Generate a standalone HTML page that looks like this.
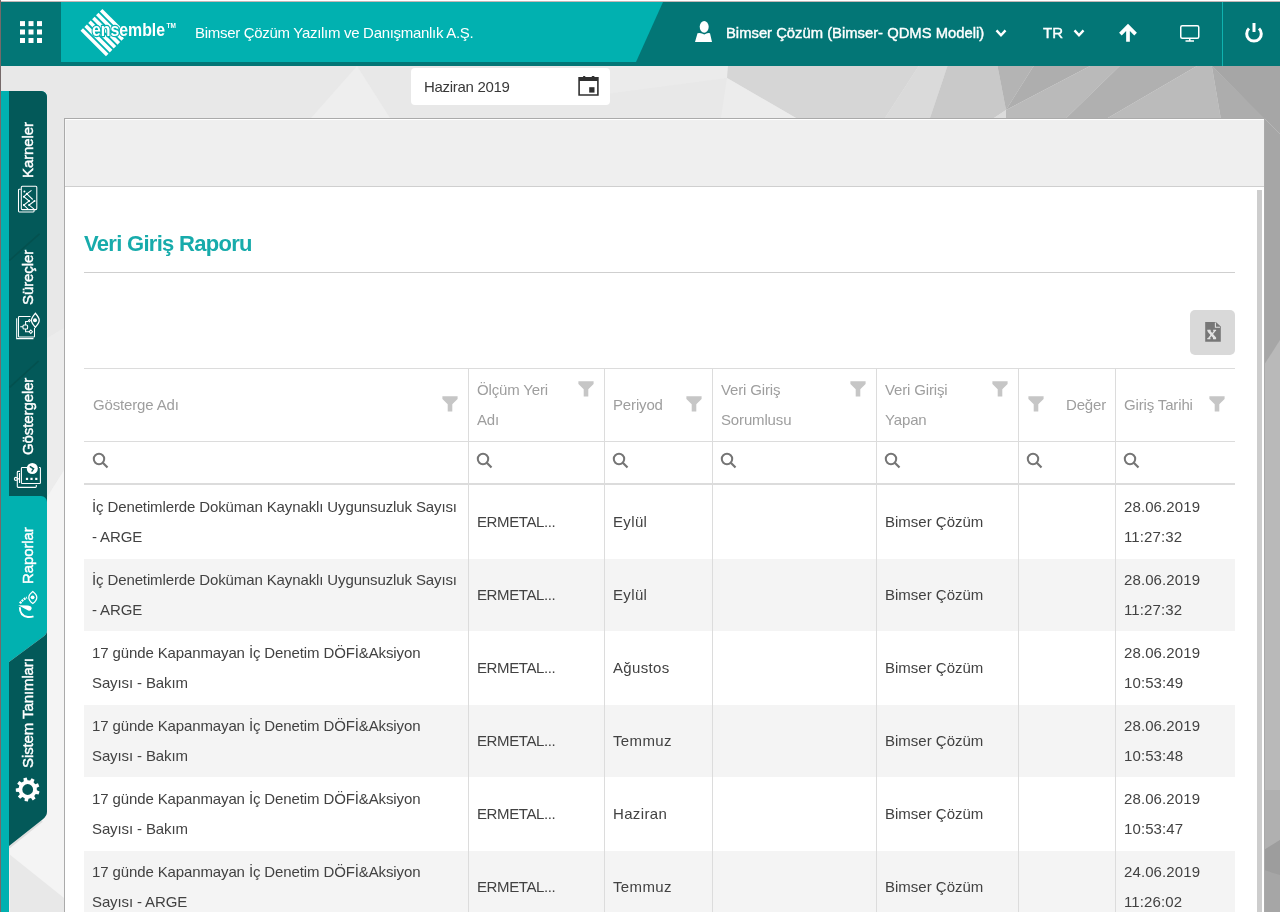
<!DOCTYPE html>
<html><head><meta charset="utf-8">
<style>
*{box-sizing:border-box}
html,body{margin:0;padding:0}
body{width:1280px;height:912px;overflow:hidden;position:relative;background:#e9e9e9;font-family:"Liberation Sans",sans-serif;}
.a{position:absolute}
svg{display:block}
.c,.h,.w,.side,#title,#dateTxt{will-change:transform}
#frameTop{left:0;top:0;width:1280px;height:1px;background:#fff}
#frameTop2{left:0;top:1px;width:1280px;height:1px;background:#c4b6b6}
#frameLeft{left:0;top:0;width:1px;height:912px;background:#756969}
#hdr{left:1px;top:2px;width:1279px;height:64px;background:#037676}
#teal{left:61px;top:2px;width:602px;height:60px;background:#01b1b0;clip-path:polygon(0 0,100% 0,575px 100%,0 100%)}
.w{color:#fff;white-space:nowrap}
#company{left:195px;top:24px;font-size:15px;letter-spacing:-0.3px}
#user{left:726px;top:25px;font-size:14.8px;-webkit-text-stroke:0.4px #fff}
#tr{left:1043px;top:24px;font-size:15px;-webkit-text-stroke:0.4px #fff}
#divider{left:1222px;top:2px;width:1px;height:64px;background:#0fb3b0}

/* sidebar */
#strip{left:1px;top:91px;width:8px;height:821px;background:#01b1b0}
#stripTop{left:1px;top:91px;width:8px;height:6px;background:#01b1b0}
.side{font-size:15px;font-weight:400;letter-spacing:-0.1px;-webkit-text-stroke:0.4px #fff;color:#fff;white-space:nowrap;transform-origin:0 0;transform:rotate(-90deg)}

/* date picker */
#date{left:411px;top:68px;width:199px;height:37px;background:#fff;border-radius:4px;}
#dateTxt{left:424px;top:78px;font-size:15px;color:#383838;letter-spacing:-0.3px}

/* panel */
#panel{left:64px;top:118px;width:1201px;height:800px;background:#fff;border:1px solid #aaa;}
#phead{left:65px;top:119px;width:1199px;height:67px;background:#efefef;border-top:1px solid #fff;border-left:1px solid #f5f5f5}
#pheadB{left:65px;top:186px;width:1199px;height:1px;background:#cfcfcf}
#scroll{left:1257px;top:190px;width:5px;height:722px;background:#cdcdcd}
#title{left:84px;top:231px;font-size:22px;font-weight:700;letter-spacing:-0.7px;color:#17abab;white-space:nowrap}
#tline{left:84px;top:272px;width:1151px;height:1px;background:#cfcfcf}
#xls{left:1190px;top:310px;width:45px;height:45px;background:#d9d9d9;border-radius:5px}

/* table */
#tbl{left:84px;top:368px;width:1151px}
.hl{position:absolute;left:0;width:1151px;background:#dcdcdc}
.vl{position:absolute;width:1px;background:#dcdcdc}
.row{position:absolute;left:0;width:1151px;height:73px}
.row.g::before{content:"";position:absolute;left:0;right:0;top:1px;bottom:0;background:#f4f4f4}
.c{position:absolute;font-size:15px;color:#424242;line-height:30px;white-space:nowrap}
.h{position:absolute;font-size:15px;color:#9e9e9e;line-height:30px;white-space:nowrap;letter-spacing:-0.15px}
.flt{position:absolute}
.srch{position:absolute;top:85px}
</style></head>
<body>
<!-- background -->
<svg class="a" style="left:0;top:0" width="1280" height="912" viewBox="0 0 1280 912">
<rect width="1280" height="912" fill="#e8e8e8"/>
<polygon points="357,66 311,118 390,118" fill="#eeeeee"/>
<polygon points="560,66 728,66 727,78 560,100" fill="#ebebeb"/>
<polygon points="728,66 918.7,66 885,118 796,118 727,78" fill="#d6d6d6"/>
<polygon points="727,78 721,118 796,118" fill="#ececec"/>
<polygon points="918.7,66 947.5,66 930,118 885,118" fill="#dadada"/>
<polygon points="947.5,66 997.5,66 1006,110 994,118 930,118" fill="#c9c9c9"/>
<polygon points="994,118 1006,110 1006,118" fill="#dcdcdc"/>
<polygon points="997.5,66 1033.6,66 1006,110" fill="#b4b4b4"/>
<polygon points="1033.6,66 1090,66 1006,110" fill="#aeaeae"/>
<polygon points="1090,66 1119.7,66 1066.3,118 1006,118 1006,110" fill="#bababa"/>
<polygon points="1119.7,66 1196.9,66 1107.8,118 1066.3,118" fill="#b0b0b0"/>
<polygon points="1196.9,66 1211.8,66 1220.7,118 1107.8,118" fill="#bbbbbb"/>
<polygon points="1211.8,66 1220.7,118 1265,118" fill="#adadad"/>
<polygon points="1211.8,66 1280,66 1280,134 1264,118" fill="#a6a6a6"/>
<polygon points="1264,118 1280,134 1280,912 1264,912" fill="#a6a6a6"/>
<polygon points="1264,365 1280,340 1280,790 1264,790" fill="#b9b9b9"/>
<polygon points="1264,790 1280,790 1280,840 1264,850" fill="#b0b0b0"/>
<polygon points="1264,850 1280,840 1280,875 1264,870" fill="#9d9d9d"/>
<polygon points="47,338 64,328 64,470 47,497" fill="#ececec"/>
<polygon points="47,497 64,470 64,898 9,854 9,846 47,815" fill="#f4f4f4"/>
<rect x="9" y="846" width="1" height="66" fill="#f8f0f0"/>
</svg>

<div class="a" id="frameTop"></div><div class="a" id="frameTop2"></div>
<div class="a" id="hdr"></div>
<div class="a" id="teal"></div>
<div class="a" id="frameLeft"></div>
<div class="a" id="divider"></div>

<!-- grid icon -->
<svg class="a" style="left:18px;top:19px" width="26" height="26" viewBox="0 0 26 26" fill="#fff">
<rect x="2" y="2.1" width="5" height="5"/><rect x="10.5" y="2.1" width="5" height="5"/><rect x="19" y="2.1" width="5" height="5"/>
<rect x="2" y="10.5" width="5" height="5"/><rect x="10.5" y="10.5" width="5" height="5"/><rect x="19" y="10.5" width="5" height="5"/>
<rect x="2" y="19" width="5" height="5"/><rect x="10.5" y="19" width="5" height="5"/><rect x="19" y="19" width="5" height="5"/>
</svg>

<!-- logo -->
<svg class="a" style="left:76px;top:4px;will-change:transform" width="104" height="56" viewBox="0 0 104 56">
<g transform="translate(26.4,4.9) rotate(45)" fill="#fff">
<rect x="0" y="0" width="36" height="3.6"/>
<rect x="0" y="5.48" width="36" height="3.6"/>
<rect x="0" y="10.96" width="36" height="3.6"/>
<rect x="0" y="16.44" width="36" height="3.6"/>
<rect x="0" y="21.92" width="36" height="3.6"/>
<rect x="0" y="27.4" width="36" height="3.6"/>
</g>
<text x="16" y="31.7" font-family="Liberation Sans" font-size="18.5" font-weight="700" fill="#fff" stroke="#01b1b0" stroke-width="2.4" paint-order="stroke" stroke-linejoin="round" textLength="73" lengthAdjust="spacingAndGlyphs">ensemble</text>
<text x="90.6" y="24.2" font-family="Liberation Sans" font-size="6.8" font-weight="700" fill="#fff" textLength="9.4" lengthAdjust="spacingAndGlyphs">TM</text>
</svg>

<div class="a w" id="company">Bimser Çözüm Yazılım ve Danışmanlık A.Ş.</div>

<!-- user icon -->
<svg class="a" style="left:694px;top:20px" width="20" height="24" viewBox="0 0 20 24" fill="#fff">
<ellipse cx="10.2" cy="6.8" rx="4.5" ry="5.9"/>
<path d="M3.5 13.2 Q7 12.2 10.3 14.5 Q13.5 12.2 16 13.2 L18 22 L1 22 Z"/>
</svg>
<div class="a w" id="user">Bimser Çözüm (Bimser- QDMS Modeli)</div>
<svg class="a" style="left:994px;top:27px" width="14" height="12" viewBox="0 0 14 12"><path d="M2.5 3.4 L7 8.3 L11.5 3.4" fill="none" stroke="#fff" stroke-width="2.4"/></svg>
<div class="a w" id="tr">TR</div>
<svg class="a" style="left:1072px;top:27px" width="14" height="12" viewBox="0 0 14 12"><path d="M2.5 3.4 L7 8.3 L11.5 3.4" fill="none" stroke="#fff" stroke-width="2.4"/></svg>
<!-- up arrow -->
<svg class="a" style="left:1116px;top:22px" width="24" height="24" viewBox="0 0 24 24"><path d="M12 19.8 V5 M4.4 12.1 L12 4.4 L19.6 12.1" fill="none" stroke="#fff" stroke-width="3.7" stroke-linecap="butt"/></svg>
<!-- monitor -->
<svg class="a" style="left:1178px;top:23px" width="24" height="20" viewBox="0 0 24 20" fill="none" stroke="#fff" stroke-width="1.5">
<rect x="2.75" y="2.75" width="18" height="12.5" rx="1.5"/><path d="M11.75 15.5 V17.5 M7.5 18 H16"/></svg>
<!-- power -->
<svg class="a" style="left:1241px;top:21px" width="26" height="24" viewBox="0 0 26 24" fill="none" stroke="#fff" stroke-width="3">
<path d="M8 7.5 A7.3 7.3 0 1 0 18 7.5"/><path d="M13 2 V11"/></svg>

<!-- sidebar -->
<svg class="a" style="left:0;top:85px" width="60" height="827" viewBox="0 0 60 827">
<path d="M9 762.5 L42 736" stroke="#dedede" stroke-width="2.2"/>
<path d="M1 6 H41 A6 6 0 0 1 47 12 V410 H9 V827 H1 Z" fill="#01b1b0"/>
<path d="M9 6 H41 A6 6 0 0 1 47 12 V425 H9 Z" fill="#035959"/>
<path d="M9.4 175.5 L39.5 148.9" stroke="#04514f" stroke-width="1.6"/>
<path d="M9.6 302.4 L38.6 276" stroke="#04514f" stroke-width="1.6"/>
<path d="M1 411 H41 A6 6 0 0 1 47 417 V545 Q47 549 43.5 551.5 L9 577 V827 H1 Z" fill="#01b1b0"/>
<path d="M9 577 L43.5 551.5 Q47 549 47 545 V726.8 Q47 731 42.5 734.5 L9 761 Z" fill="#035959"/>
</svg>
<div class="a side" style="left:18.5px;top:178px">Karneler</div>
<div class="a side" style="left:18.5px;top:305px">Süreçler</div>
<div class="a side" style="left:18.5px;top:455px">Göstergeler</div>
<div class="a side" style="left:18.5px;top:584px">Raporlar</div>
<div class="a side" style="left:18.5px;top:768px">Sistem Tanımları</div>

<!-- sidebar icons -->
<svg class="a" style="left:14px;top:182px" width="28" height="34" viewBox="0 0 28 34" fill="none" stroke="#fff" stroke-width="1.05">
<rect x="7.3" y="4.3" width="15.5" height="23.3" rx="1"/>
<path d="M6.8 7.3 H5.3 Q4.5 7.3 4.5 8.1 V29.1 Q4.5 29.9 5.3 29.9 H19.3 Q20.1 29.9 20.1 29.1 V28"/>
<path d="M12.9 11.9 L17.5 8.4 M12.9 11.9 L9.9 14.7 M12.9 11.9 L18.7 17.5 M9.9 14.7 L15.1 19 L9.9 23.1 L14.5 27.6 M20.5 19 L15.1 23.1 L20.1 27.2"/>
<g fill="#fff" stroke="none"><circle cx="10.4" cy="9.5" r="1"/><circle cx="12.9" cy="11.9" r="1.1"/><circle cx="9.9" cy="14.7" r="1"/><circle cx="15.1" cy="19" r="1"/><circle cx="20.5" cy="19" r="1"/><circle cx="9.9" cy="23.1" r="1"/><circle cx="15.1" cy="23.1" r="1"/></g>
</svg>
<svg class="a" style="left:12px;top:308px" width="30" height="36" viewBox="0 0 30 36" fill="none" stroke="#fff" stroke-width="1.05">
<path d="M18.5 8.5 H7.3 Q6.5 8.5 6.5 9.3 V28.2 Q6.5 29 7.3 29 H21.7 Q22.5 29 22.5 28.2 V20"/>
<path d="M4.7 10.3 V30.6 H21.5"/>
<rect x="11" y="17" width="4.6" height="3.9" rx="1"/>
<path d="M8.3 18.75 H11 M13.6 17 V13.4 H16.5 M13.6 20.9 V23.7 H17"/>
<path d="M17.4 11.6 L18.3 12.6 L17.4 13.6 L16.5 12.6 Z"/>
<path d="M18.8 24 L18.8 24 M17.2 23.7 L18.8 22 L20.5 23.7 L18.8 25.5 Z"/>
<path d="M23.3 5.3 Q27.4 10 27.2 12.3 Q27.4 14.6 23.3 19.3 Q19.3 14.6 19.4 12.3 Q19.3 10 23.3 5.3 Z" stroke-width="1.3"/>
<circle cx="23" cy="12.3" r="2" fill="#fff" stroke="none"/>
</svg>
<svg class="a" style="left:10px;top:458px" width="34" height="36" viewBox="0 0 34 36" fill="none" stroke="#fff" stroke-width="1.1">
<path d="M17.5 9.5 H12.2 Q11.4 9.5 11.4 10.3 V24.7 Q11.4 25.5 12.2 25.5 H29.6 Q30.4 25.5 30.4 24.7 V10.3 Q30.4 9.5 29.6 9.5 H29"/>
<path d="M10 13.4 H8.1 Q7.3 13.4 7.3 14.2 V28.6 Q7.3 29.4 8.1 29.4 H25.5 Q26.3 29.4 26.3 28.6 V27"/>
<circle cx="5.9" cy="20.9" r="1.5"/><path d="M7.5 20.9 H9.5 M9.5 15 V25"/>
<circle cx="22.3" cy="10.5" r="5.5" fill="#fff" stroke="none"/>
<path d="M19.8 8.3 L23.6 10.8 L21.6 13.6" stroke="#035959" stroke-width="1.4"/>
<g fill="#fff" stroke="none"><rect x="15.9" y="19.8" width="2.2" height="2.2"/><rect x="20.4" y="19.8" width="2.2" height="2.2"/><rect x="25.2" y="19.8" width="2.2" height="2.2"/></g>
</svg>
<svg class="a" style="left:12px;top:586px" width="30" height="36" viewBox="0 0 30 36" fill="none" stroke="#fff">
<path d="M20.8 5.5 C23.6 7.7 24.8 9.5 24.8 11.4 C24.8 13.4 23.6 15.3 20.8 17.5 C18 15.3 16.8 13.4 16.8 11.4 C16.8 9.5 18 7.7 20.8 5.5 Z" stroke-width="1.25"/>
<circle cx="20.6" cy="11.3" r="1.9" fill="#fff" stroke="none"/>
<path d="M8 17.4 Q10.8 13.2 15 11.6" stroke-width="2.3" stroke-dasharray="2 0.8"/>
<path d="M6.2 19.3 L16 19.6 Q19.8 20.2 19.6 22.5 Q19.2 25.2 16.2 24.6 Z" fill="#fff" stroke="none"/>
<path d="M7.8 21.3 Q7.8 30 15.8 31 Q19 31.2 21.5 30.4" stroke-width="1.9"/>
</svg>
<svg class="a" style="left:10px;top:772px" width="34" height="34" viewBox="0 0 34 34">
<path fill="#fff" fill-rule="evenodd" d="M13.81 9.16 L13.40 6.30 L16.65 5.55 L17.54 8.30 L20.08 8.61 L21.61 6.15 L24.58 7.67 L23.49 10.35 L25.24 12.22 L27.99 11.32 L29.29 14.39 L26.73 15.74 L26.86 18.30 L29.55 19.38 L28.58 22.57 L25.75 21.96 L24.21 24.01 L25.57 26.56 L22.77 28.38 L21.00 26.09 L18.50 26.66 L17.91 29.50 L14.59 29.09 L14.70 26.20 L12.42 25.04 L10.15 26.83 L7.87 24.38 L9.81 22.24 L8.81 19.88 L5.92 19.79 L5.75 16.45 L8.61 16.06 L9.36 13.61 L7.20 11.68 L9.21 9.01 L11.66 10.56 Z M23.10 17.50 A5.4 5.4 0 1 0 12.30 17.50 A5.4 5.4 0 1 0 23.10 17.50 Z"/>
</svg>

<!-- date picker -->
<div class="a" id="date"></div>
<div class="a" id="dateTxt">Haziran 2019</div>
<svg class="a" style="left:572px;top:70px" width="32" height="32" viewBox="0 0 32 32">
<path fill="#303030" fill-rule="evenodd" d="M6.3 7 H26.7 V25.8 H6.3 Z M7.9 10.9 V24.2 H25.1 V10.9 Z"/>
<rect x="11" y="5.9" width="2.4" height="1.6" rx="0.7" fill="#303030"/><rect x="19.7" y="5.9" width="2.8" height="1.6" rx="0.7" fill="#303030"/>
<rect x="17.2" y="17.2" width="5.3" height="5.4" fill="#303030"/>
</svg>

<!-- panel -->
<div class="a" id="panel"></div>
<div class="a" id="phead"></div>
<div class="a" id="pheadB"></div>
<div class="a" id="scroll"></div>
<div class="a" id="title">Veri Giriş Raporu</div>
<div class="a" id="tline"></div>
<div class="a" id="xls"></div>
<svg class="a" style="left:1198px;top:316px" width="30" height="32" viewBox="0 0 30 32">
<path d="M7.2 6.1 H17.9 L22.8 10.5 V25.8 H7.2 Z" fill="#777"/>
<path d="M17.4 6.6 V11.3 H22" fill="none" stroke="#e2e2e2" stroke-width="1.1"/>
<g stroke="#e2e2e2" fill="none"><path d="M10.4 14.6 L17.3 22.5" stroke-width="2.6"/><path d="M17 14.6 L10.6 22.5" stroke-width="1.4"/><path d="M9.3 14.4 H12.6 M15.2 14.4 H18.1 M9.3 22.6 H12.4 M15 22.6 H18.1" stroke-width="1.1"/></g>
</svg>

<div class="a" id="tbl">
<div class="hl" style="top:0;height:1px"></div>
<div class="hl" style="top:73px;height:1px"></div>
<div class="hl" style="top:115px;height:2px"></div>
<div class="h" style="left:9px;top:22px">Gösterge Adı</div>
<svg class="flt" style="left:358px;top:28px" width="16" height="16" viewBox="0 0 16 16"><path d="M0.4 0.3 H15.6 V3 L10.3 8.3 V15.6 H5.7 V8.3 L0.4 3 Z" fill="#c6c6c6"/></svg>
<svg class="srch" style="left:8px;top:84px" width="18" height="18" viewBox="0 0 18 18"><circle cx="7" cy="7" r="5.2" fill="none" stroke="#757575" stroke-width="2"/><path d="M10.8 10.8 L15.5 15.5" stroke="#757575" stroke-width="2.2"/></svg>
<div class="h" style="left:393px;top:7px">Ölçüm Yeri<br>Adı</div>
<svg class="flt" style="left:494px;top:13px" width="16" height="16" viewBox="0 0 16 16"><path d="M0.4 0.3 H15.6 V3 L10.3 8.3 V15.6 H5.7 V8.3 L0.4 3 Z" fill="#c6c6c6"/></svg>
<svg class="srch" style="left:392px;top:84px" width="18" height="18" viewBox="0 0 18 18"><circle cx="7" cy="7" r="5.2" fill="none" stroke="#757575" stroke-width="2"/><path d="M10.8 10.8 L15.5 15.5" stroke="#757575" stroke-width="2.2"/></svg>
<div class="h" style="left:529px;top:22px">Periyod</div>
<svg class="flt" style="left:602px;top:28px" width="16" height="16" viewBox="0 0 16 16"><path d="M0.4 0.3 H15.6 V3 L10.3 8.3 V15.6 H5.7 V8.3 L0.4 3 Z" fill="#c6c6c6"/></svg>
<svg class="srch" style="left:528px;top:84px" width="18" height="18" viewBox="0 0 18 18"><circle cx="7" cy="7" r="5.2" fill="none" stroke="#757575" stroke-width="2"/><path d="M10.8 10.8 L15.5 15.5" stroke="#757575" stroke-width="2.2"/></svg>
<div class="h" style="left:637px;top:7px">Veri Giriş<br>Sorumlusu</div>
<svg class="flt" style="left:766px;top:13px" width="16" height="16" viewBox="0 0 16 16"><path d="M0.4 0.3 H15.6 V3 L10.3 8.3 V15.6 H5.7 V8.3 L0.4 3 Z" fill="#c6c6c6"/></svg>
<svg class="srch" style="left:636px;top:84px" width="18" height="18" viewBox="0 0 18 18"><circle cx="7" cy="7" r="5.2" fill="none" stroke="#757575" stroke-width="2"/><path d="M10.8 10.8 L15.5 15.5" stroke="#757575" stroke-width="2.2"/></svg>
<div class="h" style="left:801px;top:7px">Veri Girişi<br>Yapan</div>
<svg class="flt" style="left:908px;top:13px" width="16" height="16" viewBox="0 0 16 16"><path d="M0.4 0.3 H15.6 V3 L10.3 8.3 V15.6 H5.7 V8.3 L0.4 3 Z" fill="#c6c6c6"/></svg>
<svg class="srch" style="left:800px;top:84px" width="18" height="18" viewBox="0 0 18 18"><circle cx="7" cy="7" r="5.2" fill="none" stroke="#757575" stroke-width="2"/><path d="M10.8 10.8 L15.5 15.5" stroke="#757575" stroke-width="2.2"/></svg>
<div class="h" style="right:129px;top:22px">Değer</div>
<svg class="flt" style="left:944px;top:28px" width="16" height="16" viewBox="0 0 16 16"><path d="M0.4 0.3 H15.6 V3 L10.3 8.3 V15.6 H5.7 V8.3 L0.4 3 Z" fill="#c6c6c6"/></svg>
<svg class="srch" style="left:942px;top:84px" width="18" height="18" viewBox="0 0 18 18"><circle cx="7" cy="7" r="5.2" fill="none" stroke="#757575" stroke-width="2"/><path d="M10.8 10.8 L15.5 15.5" stroke="#757575" stroke-width="2.2"/></svg>
<div class="h" style="left:1040px;top:22px">Giriş Tarihi</div>
<svg class="flt" style="left:1125px;top:28px" width="16" height="16" viewBox="0 0 16 16"><path d="M0.4 0.3 H15.6 V3 L10.3 8.3 V15.6 H5.7 V8.3 L0.4 3 Z" fill="#c6c6c6"/></svg>
<svg class="srch" style="left:1039px;top:84px" width="18" height="18" viewBox="0 0 18 18"><circle cx="7" cy="7" r="5.2" fill="none" stroke="#757575" stroke-width="2"/><path d="M10.8 10.8 L15.5 15.5" stroke="#757575" stroke-width="2.2"/></svg>
<div class="row" style="top:117px"></div>
<div class="row g" style="top:190px"></div>
<div class="row" style="top:263px"></div>
<div class="row g" style="top:336px"></div>
<div class="row" style="top:409px"></div>
<div class="row g" style="top:482px"></div>
<div class="c" style="left:8px;top:124px;letter-spacing:-0.12px">İç Denetimlerde Doküman Kaynaklı Uygunsuzluk Sayısı<br>- ARGE</div>
<div class="c" style="left:393px;top:139px;letter-spacing:-0.4px">ERMETAL...</div>
<div class="c" style="left:529px;top:139px;letter-spacing:0.35px">Eylül</div>
<div class="c" style="left:801px;top:139px;letter-spacing:0px">Bimser Çözüm</div>
<div class="c" style="left:1040px;top:124px;letter-spacing:0.1px">28.06.2019<br>11:27:32</div>
<div class="c" style="left:8px;top:197px;letter-spacing:-0.12px">İç Denetimlerde Doküman Kaynaklı Uygunsuzluk Sayısı<br>- ARGE</div>
<div class="c" style="left:393px;top:212px;letter-spacing:-0.4px">ERMETAL...</div>
<div class="c" style="left:529px;top:212px;letter-spacing:0.35px">Eylül</div>
<div class="c" style="left:801px;top:212px;letter-spacing:0px">Bimser Çözüm</div>
<div class="c" style="left:1040px;top:197px;letter-spacing:0.1px">28.06.2019<br>11:27:32</div>
<div class="c" style="left:8px;top:270px;letter-spacing:-0.12px">17 günde Kapanmayan İç Denetim DÖFİ&amp;Aksiyon<br>Sayısı - Bakım</div>
<div class="c" style="left:393px;top:285px;letter-spacing:-0.4px">ERMETAL...</div>
<div class="c" style="left:529px;top:285px;letter-spacing:0.35px">Ağustos</div>
<div class="c" style="left:801px;top:285px;letter-spacing:0px">Bimser Çözüm</div>
<div class="c" style="left:1040px;top:270px;letter-spacing:0.1px">28.06.2019<br>10:53:49</div>
<div class="c" style="left:8px;top:343px;letter-spacing:-0.12px">17 günde Kapanmayan İç Denetim DÖFİ&amp;Aksiyon<br>Sayısı - Bakım</div>
<div class="c" style="left:393px;top:358px;letter-spacing:-0.4px">ERMETAL...</div>
<div class="c" style="left:529px;top:358px;letter-spacing:0.35px">Temmuz</div>
<div class="c" style="left:801px;top:358px;letter-spacing:0px">Bimser Çözüm</div>
<div class="c" style="left:1040px;top:343px;letter-spacing:0.1px">28.06.2019<br>10:53:48</div>
<div class="c" style="left:8px;top:416px;letter-spacing:-0.12px">17 günde Kapanmayan İç Denetim DÖFİ&amp;Aksiyon<br>Sayısı - Bakım</div>
<div class="c" style="left:393px;top:431px;letter-spacing:-0.4px">ERMETAL...</div>
<div class="c" style="left:529px;top:431px;letter-spacing:0.35px">Haziran</div>
<div class="c" style="left:801px;top:431px;letter-spacing:0px">Bimser Çözüm</div>
<div class="c" style="left:1040px;top:416px;letter-spacing:0.1px">28.06.2019<br>10:53:47</div>
<div class="c" style="left:8px;top:489px;letter-spacing:-0.12px">17 günde Kapanmayan İç Denetim DÖFİ&amp;Aksiyon<br>Sayısı - ARGE</div>
<div class="c" style="left:393px;top:504px;letter-spacing:-0.4px">ERMETAL...</div>
<div class="c" style="left:529px;top:504px;letter-spacing:0.35px">Temmuz</div>
<div class="c" style="left:801px;top:504px;letter-spacing:0px">Bimser Çözüm</div>
<div class="c" style="left:1040px;top:489px;letter-spacing:0.1px">24.06.2019<br>11:26:02</div>
<div class="vl" style="left:384px;top:0;height:600px"></div>
<div class="vl" style="left:520px;top:0;height:600px"></div>
<div class="vl" style="left:628px;top:0;height:600px"></div>
<div class="vl" style="left:792px;top:0;height:600px"></div>
<div class="vl" style="left:934px;top:0;height:600px"></div>
<div class="vl" style="left:1031px;top:0;height:600px"></div>
</div>
</body></html>
